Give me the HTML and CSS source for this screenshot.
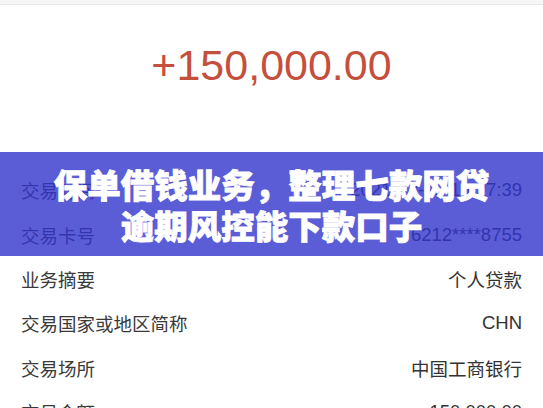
FILE: index.html
```html
<!DOCTYPE html>
<html lang="zh-CN">

<head>
    <meta charset="UTF-8">
    <meta name="viewport" content="width=device-width, initial-scale=1.0">
    <title>交易详情</title>
    <link rel="stylesheet" href="styles.css">
</head>

<body>
    <div class="page">
        <div class="topbar"></div>

        <div class="amount">+150,000.00</div>

        <div class="details">
            <div class="row">
                <span class="label">交易时间</span>
                <span class="value">2021-12-22 10:27:39</span>
            </div>
            <div class="row">
                <span class="label">交易卡号</span>
                <span class="value">6212****8755</span>
            </div>
            <div class="row">
                <span class="label">业务摘要</span>
                <span class="value">个人贷款</span>
            </div>
            <div class="row">
                <span class="label">交易国家或地区简称</span>
                <span class="value">CHN</span>
            </div>
            <div class="row">
                <span class="label">交易场所</span>
                <span class="value">中国工商银行</span>
            </div>
            <div class="row">
                <span class="label">交易金额</span>
                <span class="value">150,000.00</span>
            </div>
        </div>

        <!-- title banner over the list -->
        <div class="banner">
            <h1>保单借钱业务，整理七款网贷<br>逾期风控能下款口子</h1>
        </div>
    </div>
</body>

</html>
```

FILE: styles.css
```css
* {
    box-sizing: border-box;
}

body {
    margin: 0;
    background-color: #fff;
    font-family: "Liberation Sans", "Noto Sans CJK SC", sans-serif;
    overflow: hidden;
}

.page {
    position: relative;
    width: 543px;
    height: 408px;
    overflow: hidden;
}

.topbar {
    height: 5px;
    background-color: #f7f7f7;
    border-bottom: 1px solid #e9e9e9;
}

.amount {
    height: 147px;
    padding-top: 38px;
    text-align: center;
    color: #c54f3d;
    font-size: 43px;
    line-height: 44px;
}

.details {
    display: flex;
    flex-direction: column;
    padding: 16px 21px 0 21px;
}

.row {
    display: flex;
    justify-content: space-between;
    align-items: center;
    flex-shrink: 0;
    height: 44.4px;
    font-size: 18.5px;
    color: #333;
}

.label {
    color: #3a3a3a;
}

.banner {
    position: absolute;
    left: 0;
    top: 152px;
    width: 100%;
    height: 104px;
    display: flex;
    align-items: center;
    justify-content: center;
    background-color: rgba(50, 53, 205, 0.8);
}

.banner h1 {
    margin: 0;
    color: #fff;
    font-family: "Noto Sans CJK SC", sans-serif;
    font-weight: 900;
    font-size: 33.5px;
    line-height: 41px;
    text-align: center;
    -webkit-text-stroke: 0.8px #fff;
}
```
